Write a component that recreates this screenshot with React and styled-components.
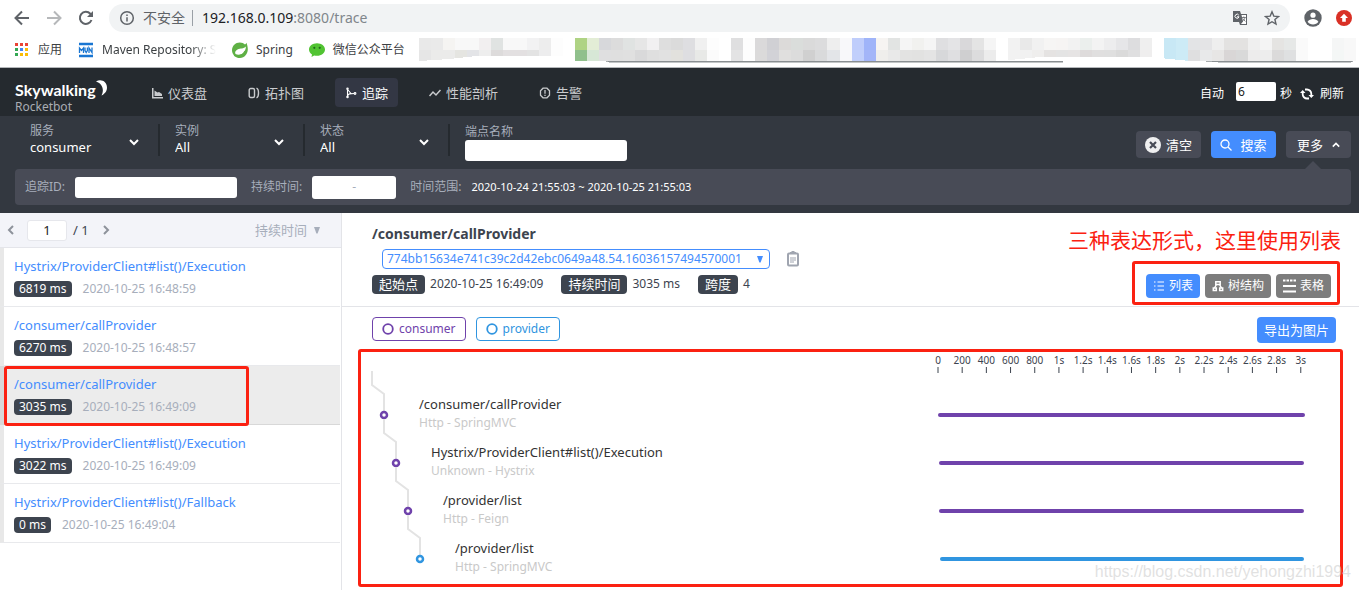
import React from "react";
import styled, { createGlobalStyle } from "styled-components";

const sans = `"Noto Sans", "Open Sans", "Noto Sans CJK SC", sans-serif`;
const red = "#fb2111";
const blue = "#448dfe";
const purple = "#6f42ab";
const sky = "#3095e0";

const Global = createGlobalStyle`
  * { box-sizing: border-box; }
  body { margin: 0; background: #fff; font: 13px/20px ${sans}; color: #3d444f; }
  button, input, select { font: inherit; color: inherit; margin: 0; padding: 0; border: 0; }
  button { background: none; cursor: pointer; }
  select { appearance: none; background: none; cursor: pointer; outline: 0; }
  a { color: inherit; text-decoration: none; }
  svg { display: block; flex: none; }
  h1, p, ul, ol { margin: 0; padding: 0; list-style: none; }
`;

const Page = styled.div`
  display: flex;
  flex-direction: column;
  min-height: 100vh;
  overflow: hidden;
`;

/* ---------- browser chrome ---------- */
const AddressBar = styled.div`
  display: flex;
  align-items: center;
  height: 36px;
  padding: 0 7px 0 13px;
  gap: 14px;
  color: #5f6368;
`;
const ChromeButton = styled.button`
  display: flex;
  justify-content: center;
  min-width: ${(p) => (p.$small ? 16 : 18)}px;
  opacity: ${(p) => (p.$dim ? 0.45 : 1)};
`;
const AddressPill = styled.div`
  display: flex;
  align-items: center;
  flex: 1;
  height: 28px;
  padding: 0 10px;
  border-radius: 14px;
  background: #f1f3f4;
  font-size: 14px;
`;
const Insecure = styled.span`
  margin-left: 8px;
  padding-right: 7px;
  border-right: 1px solid #9aa0a6;
  line-height: 16px;
`;
const AddressText = styled.a`
  flex: 1;
  margin-left: 9px;
  color: #80868b;
  b { font-weight: 400; color: #202124; }
`;
const PillIcons = styled.div`
  display: flex;
  gap: 16px;
`;
const Bookmarks = styled.nav`
  display: flex;
  align-items: center;
  height: 32px;
  padding: 0 2px 3px 14px;
  border-bottom: 1px solid #b4b7ba;
  font-size: 12px;
  color: #3c4043;
`;
const Bookmark = styled.a`
  display: flex;
  align-items: center;
  flex: none;
  gap: 8px;
  margin-right: ${(p) => p.$after || 16}px;
  white-space: nowrap;
`;
const Faded = styled.span`
  width: 114px;
  overflow: hidden;
  mask-image: linear-gradient(90deg, #000 88px, transparent 114px);
`;
const Mosaic = styled.svg`
  flex: 1;
  min-width: 0;
  height: 26px;
`;

/* ---------- application header ---------- */
const Header = styled.header`
  display: flex;
  align-items: center;
  height: 48px;
  padding: 0 15px;
  background: #252a2f;
  color: #fff;
`;
const Brand = styled.div`
  width: 126px;
  padding-top: 10px;
`;
const BrandName = styled.div`
  display: flex;
  font: 700 16px/20px Lato, sans-serif;
`;
const BrandSub = styled.div`
  font-size: 12px;
  line-height: 14px;
  color: #a9adb3;
`;
const Nav = styled.nav`
  display: flex;
  gap: 21px;
  flex: 1;
`;
const NavItem = styled.a`
  display: flex;
  align-items: center;
  gap: 5px;
  height: 29px;
  padding: 2px 10px 0;
  border-radius: 4px;
  color: ${(p) => (p.$active ? "#fff" : "#c9cbce")};
  background: ${(p) => (p.$active ? "#333744" : "none")};
`;
const Refresh = styled.div`
  display: flex;
  align-items: center;
  padding-top: 3px;
  font-size: 12px;
`;
const Seconds = styled.input`
  width: 40px;
  height: 19px;
  margin: 0 4px 4px 12px;
  padding: 0 2px;
  border-radius: 2px;
  background: #fff;
  color: #222;
`;
const RefreshButton = styled.button`
  display: flex;
  align-items: center;
  gap: 6px;
  margin-left: 8px;
`;

/* ---------- filters ---------- */
const Filters = styled.section`
  padding: 0 8px 8px 15px;
  background: #333840;
`;
const FilterRow = styled.div`
  display: flex;
  align-items: flex-start;
  height: 53px;
  padding-top: 8px;
`;
const Picker = styled.label`
  position: relative;
  display: flex;
  flex-direction: column;
  width: 145px;
  height: 32px;
  padding-left: 15px;
  border-right: 2px solid #252a2f;
  font-size: 12px;
  line-height: 14px;
  color: #a7aebb;
  svg { position: absolute; right: 19px; top: 13px; pointer-events: none; }
`;
const PickerSelect = styled.select`
  height: 18px;
  font-size: 13px;
  color: #fff;
  option { color: #222; }
`;
const Endpoint = styled.label`
  display: flex;
  flex: 1;
  flex-direction: column;
  padding-left: 15px;
  font-size: 12px;
  line-height: 16px;
  color: #a7aebb;
`;
const WhiteInput = styled.input`
  width: 162px;
  height: 21px;
  padding: 0 6px;
  border-radius: 3px;
  background: #fff;
  color: #333;
`;
const Actions = styled.div`
  display: flex;
  gap: 10px;
  padding-top: 7px;
`;
const Action = styled.button`
  position: relative;
  display: flex;
  align-items: center;
  justify-content: center;
  gap: ${(p) => p.$gap || 5}px;
  width: 65px;
  height: 27px;
  border-radius: 4px;
  background: ${(p) => (p.$primary ? blue : "#484b56")};
  color: #fff;
`;
const Pointer = styled.svg`
  position: absolute;
  top: 30px;
  left: 19px;
`;
const More = styled.div`
  display: flex;
  align-items: center;
  height: 36px;
  padding: 0 10px;
  border-radius: 4px;
  background: #484b56;
  font-size: 12px;
  color: #a7aebb;
`;
const MoreField = styled.div`
  display: flex;
  align-items: center;
  gap: 10px;
  margin-right: 14px;
  time { font-size: 11px; color: #fff; }
`;
const Range = styled.div`
  display: flex;
  align-items: center;
  width: 84px;
  height: 23px;
  border-radius: 3px;
  background: #fff;
  input { flex: 1; width: 0; background: none; outline: 0; padding: 0 4px; color: #333; }
`;

/* ---------- trace list ---------- */
const Body = styled.main`
  display: flex;
  flex: 1;
`;
const Sidebar = styled.aside`
  flex: none;
  width: 342px;
  border-right: 1px solid #e3e4e8;
`;
const Pager = styled.div`
  display: flex;
  align-items: center;
  height: 35px;
  padding: 0 21px 0 6px;
  border-bottom: 1px solid #e4e5ea;
  background: #f3f4f9;
`;
const PageInput = styled.input`
  width: 40px;
  height: 21px;
  margin: 0 6px 0 11px;
  border: 1px solid #e6e7ec;
  border-radius: 3px;
  background: #fff;
  color: #222;
  text-align: center;
`;
const PageButton = styled.button`
  display: flex;
  margin-left: ${(p) => (p.$next ? 12 : 0)}px;
`;
const Sort = styled.label`
  display: flex;
  align-items: center;
  gap: 6px;
  margin-left: auto;
  color: #a7aebb;
`;
const TraceRow = styled.li`
  position: relative;
  height: 59px;
  margin-right: 1px;
  padding: 8px 0 0 10px;
  border-left: 4px solid ${(p) => (p.$active ? "#d8d8d8" : "#e8e8e8")};
  border-bottom: 1px solid ${(p) => (p.$active ? "#d8d8d8" : "#e8e9ec")};
  background: ${(p) => (p.$active ? "#ececec" : "#fff")};
`;
const TraceLink = styled.a`
  display: block;
  line-height: 20px;
  color: ${blue};
`;
const TraceMeta = styled.div`
  display: flex;
  align-items: center;
  gap: 11px;
  margin-top: 5px;
  font-size: 12px;
  line-height: 16px;
  color: #a7aebb;
`;
const Badge = styled.span`
  padding: 0 ${(p) => (p.$large ? 7 : 5)}px;
  border-radius: 4px;
  background: #3d444f;
  color: #fff;
  font-size: ${(p) => (p.$large ? 13 : 12)}px;
  line-height: ${(p) => (p.$large ? 19 : 16)}px;
`;
const Mark = styled.span`
  position: absolute;
  z-index: 1;
  inset: ${(p) => p.$inset};
  border: 3px solid ${red};
  border-radius: 3px;
  pointer-events: none;
`;

/* ---------- trace detail ---------- */
const Detail = styled.section`
  display: flex;
  flex: 1;
  flex-direction: column;
  min-width: 0;
`;
const DetailHead = styled.div`
  display: flex;
  justify-content: space-between;
  height: 94px;
  padding: 11px 28px 0 30px;
  border-bottom: 1px solid #e3e4e8;
`;
const Title = styled.h1`
  font-size: 14px;
  line-height: 20px;
  font-weight: 700;
`;
const TraceIdLine = styled.div`
  display: flex;
  align-items: center;
  gap: 16px;
  margin: 5px 0 5px 10px;
`;
const TraceId = styled.label`
  display: flex;
  align-items: center;
  justify-content: space-between;
  width: 388px;
  height: 20px;
  padding: 0 6px 0 4px;
  border: 1px solid ${blue};
  border-radius: 4px;
  color: ${blue};
  font-size: 12px;
`;
const Facts = styled.div`
  display: flex;
  align-items: center;
  gap: 5px;
  font-size: 12px;
  line-height: 20px;
`;
const Fact = styled.span`
  margin-right: 13px;
`;
const HeadTools = styled.div`
  display: flex;
  flex-direction: column;
  align-items: flex-end;
`;
const Note = styled.p`
  margin: 1px -10px 19px 0;
  font-size: 21px;
  line-height: 30px;
  white-space: nowrap;
  color: ${red};
`;
const Views = styled.div`
  position: relative;
  display: flex;
  gap: 5px;
`;
const ViewButton = styled.button`
  display: flex;
  align-items: center;
  gap: 4px;
  height: 24px;
  padding: 0 7px;
  border-radius: 4px;
  background: ${(p) => (p.$active ? blue : "#7d7d7d")};
  color: #fff;
  font-size: 12px;
`;
const Legend = styled.div`
  display: flex;
  align-items: flex-start;
  gap: 10px;
  padding: 10px 23px 6px 30px;
`;
const Service = styled.span`
  display: flex;
  align-items: center;
  gap: 5px;
  height: 24px;
  padding: 0 9px;
  border: 1px solid currentColor;
  border-radius: 4px;
  font-size: 12px;
  color: ${(p) => p.$color};
`;
const Export = styled.button`
  height: 26px;
  margin-left: auto;
  padding: 0 7px;
  border-radius: 4px;
  background: ${blue};
  color: #fff;
`;
const Spans = styled.div`
  position: relative;
  padding: 4px 54px 7px 30px;
`;
const SpanRow = styled.div`
  display: grid;
  grid-template-columns: 566fr 367fr;
  height: ${(p) => (p.$axis ? 38 : 48)}px;
`;
const Axis = styled.svg`
  grid-column: 2;
  width: 100%;
  height: 22px;
  overflow: visible;
  font-size: 10px;
  fill: #3d444f;
  text-anchor: middle;
`;
const SpanCell = styled.div`
  display: flex;
  gap: 30px;
  padding-left: ${(p) => 7 + p.$depth * 12}px;
  svg { overflow: visible; }
`;
const SpanName = styled.div`
  padding-top: 4px;
  line-height: 18px;
  color: #333;
`;
const SpanKind = styled.div`
  font-size: 12px;
  line-height: 20px;
  color: #c9c9c9;
`;
const Track = styled.div`
  display: flex;
  align-items: center;
`;
const Bar = styled.div`
  height: 4px;
  border-radius: 2px;
  background: ${(p) => p.$color};
`;
const Watermark = styled.div`
  position: absolute;
  z-index: 2;
  right: 8px;
  bottom: 8px;
  font: 16px/20px "Liberation Sans", sans-serif;
  color: rgba(205, 205, 205, 0.6);
`;

const Chevron = ({ dir = "down", size = 10, color = "#fff", width = 2 }) => {
  const d = {
    down: "M1 3l4 4 4-4",
    up: "M1 7l4-4 4 4",
    left: "M7 1L3 5l4 4",
    right: "M3 1l4 4-4 4",
  }[dir];
  return (
    <svg width={size} height={size} viewBox="0 0 10 10" fill="none" stroke={color} strokeWidth={width}>
      <path d={d} />
    </svg>
  );
};

const Triangle = ({ color }) => (
  <svg width="6" height="7" viewBox="0 0 6 7" fill={color}>
    <path d="M0 0h6L3.6 6.500h-1.200z" />
  </svg>
);

const mosaicCells =
  "e9e9e9/e6e6e6 eaeaea/ebebea f5f4f2/ebebea f8f8f8/e5e5e1 f8f8f8/e3e4e7 f2eff0/eeeeee e0e3e2/dddbdb f8f8f8/e3e0e1 f8f8f8/e3e0e1 f2f2f3/e3e3e3 ededed/ededee fdfdfd/fdfdfd ffffff/ffffff afd384/90c08c e3edd6/d7e7d6 d7d8db/dfdfe0 dcdcdc/dfdfdf e0e3e2/e0e0e0 e6e6e6/d9d9da f1f0f1/dfdfdf dedede/e1e1e1 dbdbdb/e2e1dd dedee1/dedee1 f0f0f0/e8e9e7 fdfdfd/fbfbfb ffffff/ffffff dfdfe0/e3e3e4 fdfdfd/fdfdfd dad9da/dbdada d0d0d4/d2d2d7 dcdad9/e0dfde dadddb/dcdcdc dadada/d0d0d0 dcdcdd/d9dadb eeeeee/e3e5e8 f8f8fa/f8f8fa bfcdfb/c1cffb 9fb4f9/a3b5f8 f6f4f2/efeeec e2e4e3/e9e9e9 f5f5f5/e3e3e2 f1f1ef/e2e2e1 f5f5f5/e4e4e4 dfdfe1/d7d8da e4e4e6/dfdfe1 d9d8da/cfcfd0 e4e4e4/dcdcdd f5f5f5/ececec ffffff/ffffff f2f2f2/f2f2f2 e9e9e9/f1f1f1 f1f1f1/efeeed f6f5f4/e5e3e2 f6f4f3/e4e4e4 f2f2f2/e6e4e4 ebefed/dedbdb f3f3f3/e0dfdf ededee/dfdfdf e6e6e8/dadada dddddf/dfdfe0 efefef/efeeee ffffff/ffffff c8e8f5/c8e8f5 cdebf6/cdebf6 e3e4e6/dfdfe0 e4e4e6/e8e9ea eeeeee/e7e6e5 e3e2e1/d9d6d6 e3e2e1/d9d9d9 efefef/edecec f4f4f4/ededed e5e4e2/dbdada e6e8e7/dfe0e1 fafafa/fafafa ffffff/ffffff ffffff/ffffff f5f6f6/f4f7f6 f8f8f8/f8f8f8"
    .split(" ")
    .map((c) => c.split("/"));

const traces = [
  ["Hystrix/ProviderClient#list()/Execution", "6819 ms", "2020-10-25 16:48:59"],
  ["/consumer/callProvider", "6270 ms", "2020-10-25 16:48:57"],
  ["/consumer/callProvider", "3035 ms", "2020-10-25 16:49:09"],
  ["Hystrix/ProviderClient#list()/Execution", "3022 ms", "2020-10-25 16:49:09"],
  ["Hystrix/ProviderClient#list()/Fallback", "0 ms", "2020-10-25 16:49:04"],
];
const total = 3035;
const spans = [
  { name: "/consumer/callProvider", kind: "Http - SpringMVC", color: purple, start: 0, end: 3035 },
  { name: "Hystrix/ProviderClient#list()/Execution", kind: "Unknown - Hystrix", color: purple, start: 5, end: 3027 },
  { name: "/provider/list", kind: "Http - Feign", color: purple, start: 5, end: 3027 },
  { name: "/provider/list", kind: "Http - SpringMVC", color: sky, start: 20, end: 3025 },
];
const ticks = Array.from({ length: 16 }, (_, i) => i * 200);
const tickLabel = (t) => (t < 1000 ? String(t) : `${t / 1000}s`);

const navItems = [
  ["仪表盘", <path key="a" d="M1 1h1.500v9H12v1.500H1zM3.500 9V3.500l3 2L8 5l3 2v2z" fill="currentColor" />],
  ["拓扑图", <g key="b" fill="none" stroke="currentColor" strokeWidth="1.4"><rect x="1.200" y="1.500" width="5.300" height="9" rx="1.500" /><path d="M8.500 1.200c1.600.6 2 2 2 4.800s-.4 4.200-2 4.800" /></g>],
  ["追踪", <g key="c" fill="none" stroke="currentColor" strokeWidth="1.100"><path d="M2.500 2.500v7.500M2.500 9.500C3 6.500 5 6.500 9 6.500M3 3l3 3.500" /><circle cx="2.500" cy="1.800" r=".7" /><circle cx="2.500" cy="10" r=".7" /><circle cx="10" cy="6.500" r=".9" /></g>],
  ["性能剖析", <path key="d" d="M.5 9L4 5l3 3 4.500-5" fill="none" stroke="currentColor" strokeWidth="1.500" />],
  ["告警", <g key="e" fill="none" stroke="currentColor" strokeWidth="1.300"><path d="M4 1.200h4l2.500 2.600v4.400L8 10.800H4L1.500 8.200V3.800z" /><path d="M6 3v3.800M6 7.800V9" /></g>],
];

export default function App() {
  return (
    <Page>
      <Global />
      <AddressBar>
        <ChromeButton aria-label="Back">
          <svg width="16" height="16" viewBox="0 0 16 16" fill="none" stroke="currentColor" strokeWidth="2"><path d="M15 8H2M8 1.500L1.500 8 8 14.500" /></svg>
        </ChromeButton>
        <ChromeButton aria-label="Forward" $dim>
          <svg width="16" height="16" viewBox="0 0 16 16" fill="none" stroke="currentColor" strokeWidth="2"><path d="M1 8h13M8 1.500L14.500 8 8 14.500" /></svg>
        </ChromeButton>
        <ChromeButton aria-label="Reload">
          <svg width="16" height="16" viewBox="0 0 16 16" fill="none" stroke="currentColor" strokeWidth="2"><path d="M13.500 10A6 6 0 1 1 12.300 3.800L14 5.500" /><path d="M15 1v6H9z" fill="currentColor" stroke="none" /></svg>
        </ChromeButton>
        <AddressPill>
          <svg width="16" height="16" viewBox="0 0 16 16" fill="none" stroke="currentColor" strokeWidth="1.500"><circle cx="8" cy="8" r="6.300" /><path d="M8 7.200V11.500M8 4.500V6" /></svg>
          <Insecure>不安全</Insecure>
          <AddressText href="#trace"><b>192.168.0.109</b>:8080/trace</AddressText>
          <PillIcons>
            <svg width="16" height="16" viewBox="0 0 16 16"><path d="M1 1h7l1 3h6v11H8l-1-3H1z" fill="#5f6368" /><path d="M9.500 5H14v9H9l2-2.500z" fill="#fff" /><path d="M6.800 5.200a2 2 0 1 0 .2 1.600H5" fill="none" stroke="#fff" /><path d="M9.800 7.500h4M11.800 6.500v1M13 7.500c-.4 1.800-1.400 3-2.800 3.800M10.800 8.500l2.600 3" fill="none" stroke="#5f6368" strokeWidth=".8" /></svg>
            <svg width="16" height="16" viewBox="0 0 16 16" fill="none" stroke="#5f6368" strokeWidth="1.400"><path d="M8 1.800l1.800 4.300 4.700.4-3.600 3 1.100 4.600L8 11.700l-4 2.400 1.100-4.600-3.600-3 4.700-.4z" /></svg>
          </PillIcons>
        </AddressPill>
        <ChromeButton aria-label="Profile">
          <svg width="18" height="18" viewBox="0 0 18 18"><circle cx="9" cy="9" r="8.700" fill="#5f6368" /><circle cx="9" cy="6.200" r="2.600" fill="#fff" /><path d="M3.600 12.800c1.200-2 3.200-2.800 5.400-2.800s4.200.8 5.400 2.800c-1.300 1.900-3.200 2.700-5.400 2.700s-4.100-.8-5.400-2.700z" fill="#fff" /></svg>
        </ChromeButton>
        <ChromeButton aria-label="Update" $small>
          <svg width="16" height="16" viewBox="0 0 16 16"><circle cx="8" cy="8" r="8" fill="#d93025" /><path d="M8 3.800l4 4.200H9.800v3.800H6.200V8H4z" fill="#fff" /></svg>
        </ChromeButton>
      </AddressBar>

      <Bookmarks>
        <Bookmark href="#apps">
          <svg width="16" height="16" viewBox="0 0 16 16">
            {["#ea4335", "#ea4335", "#ea4335", "#34a853", "#4285f4", "#fbbc04", "#34a853", "#fbbc04", "#fbbc04"].map((c, i) => (
              <rect key={i} x={1 + (i % 3) * 5} y={1 + Math.floor(i / 3) * 5} width="3" height="3" fill={c} />
            ))}
          </svg>
          应用
        </Bookmark>
        <Bookmark href="#maven">
          <svg width="16" height="16" viewBox="0 0 16 16" fill="none" stroke="#1976d2"><path d="M1 2h14M1 14h14" strokeWidth="2.400" /><path d="M1.500 11V6l2 2.500L5.500 6v5M7 5.500v3l1.200 2 1.200-2v-3M11 11V6l3 4.500V5.500" strokeWidth="1.300" /></svg>
          <Faded>Maven Repository: S</Faded>
        </Bookmark>
        <Bookmark href="#spring">
          <svg width="16" height="16" viewBox="0 0 16 16"><path d="M14.500.8c.6 2 1.300 4 1.300 6.500C15.800 12 12.500 16 8 16S0 12.500 0 8.200 3.500.5 7.800.5c2.200 0 4 .8 5.200 2.100.7-.5 1.200-1.100 1.500-1.800z" fill="#5fb045" /><path d="M14 4.500c-2.500 2.500-5.500 1.500-8.500 3C3.500 8.600 2.500 10.500 3.500 12c3 1.500 9.500 1.300 10.500-7.500z" fill="#fff" /><path d="M2 13.500c6 1.500 9.500-1 11-4.500" stroke="#5fb045" fill="none" strokeWidth="1.200" /></svg>
          Spring
        </Bookmark>
        <Bookmark href="#weixin" $after="14">
          <svg width="16" height="16" viewBox="0 0 16 16"><path d="M8 1.200c4.500 0 8 2.800 8 6.300s-3.500 6.300-8 6.300c-1 0-2-.1-2.800-.4L2.500 15l.5-2.600C1.200 11.300 0 9.500 0 7.500 0 4 3.500 1.200 8 1.200z" fill="#51c332" /><circle cx="5.300" cy="5.800" r="1.100" fill="#20691a" /><circle cx="10.700" cy="5.800" r="1.100" fill="#20691a" /></svg>
          微信公众平台
        </Bookmark>
        <Mosaic viewBox="0 0 937 26" preserveAspectRatio="none" shapeRendering="crispEdges" aria-hidden="true">
          {mosaicCells.map(([a, b], i) => (
            <React.Fragment key={i}>
              <rect x={i * 12} y="1" width="12" height="12" fill={`#${a}`} />
              <rect x={i * 12} y="13" width="12" height="11" fill={`#${b}`} />
            </React.Fragment>
          ))}
          <path d="M0 24l30-2 28-3h92v5z" fill="#fff" />
          <path d="M187 24h456v1H190zM786 24h147l-2 1H798z" fill="#8a8f92" stroke="#8a8f92" strokeWidth=".5" />
          <path d="M580 24l40-4h110l40 4z" fill="#fff" />
        </Mosaic>
      </Bookmarks>

      <Header>
        <Brand>
          <BrandName>
            Skywalking
            <svg width="12" height="16" viewBox="0 0 12 16"><path d="M0 1.500C5-1.500 11 1.500 11 7.500c0 4-2.500 6.500-5.500 8C8 11 7.500 4 0 1.500z" fill="#fff" /></svg>
          </BrandName>
          <BrandSub>Rocketbot</BrandSub>
        </Brand>
        <Nav>
          {navItems.map(([name, icon]) => (
            <NavItem key={name} href={`#${name}`} $active={name === "追踪"}>
              <svg width="12" height="12" viewBox="0 0 12 12">{icon}</svg>
              {name}
            </NavItem>
          ))}
        </Nav>
        <Refresh>
          <label htmlFor="interval">自动</label>
          <Seconds id="interval" defaultValue="6" />
          秒
          <RefreshButton>
            <svg width="14" height="12" viewBox="0 0 14 12" fill="none" stroke="#fff" strokeWidth="1.800"><path d="M5 1.500h2a4.300 4.300 0 0 1 4.300 4.300V8M9 10.500H7A4.300 4.300 0 0 1 2.700 6.200V4" /><path d="M8.500 7h5.500L11.300 10zM0 5h5.500L2.700 2z" fill="#fff" stroke="none" /></svg>
            刷新
          </RefreshButton>
        </Refresh>
      </Header>

      <Filters>
        <FilterRow>
          {[["服务", "consumer"], ["实例", "All"], ["状态", "All"]].map(([label, value]) => (
            <Picker key={label}>
              {label}
              <PickerSelect><option>{value}</option></PickerSelect>
              <Chevron />
            </Picker>
          ))}
          <Endpoint>
            端点名称
            <WhiteInput />
          </Endpoint>
          <Actions>
            <Action>
              <svg width="16" height="16" viewBox="0 0 16 16"><circle cx="8" cy="8" r="8" fill="#efeff0" /><path d="M5 5l6 6M11 5l-6 6" stroke="#484b56" strokeWidth="2.200" /></svg>
              清空
            </Action>
            <Action $primary $gap="8">
              <svg width="12" height="12" viewBox="0 0 12 12" fill="none" stroke="#fff" strokeWidth="1.300"><circle cx="5" cy="5" r="4" /><path d="M8 8l3.500 3.500" /></svg>
              搜索
            </Action>
            <Action $gap="9">
              更多
              <Chevron dir="up" size={8} />
              <Pointer width="16" height="8" viewBox="0 0 16 8"><path d="M0 8l8-8 8 8z" fill="#484b56" /></Pointer>
            </Action>
          </Actions>
        </FilterRow>
        <More>
          <MoreField>
            <label htmlFor="trace-id">追踪ID:</label>
            <WhiteInput id="trace-id" />
          </MoreField>
          <MoreField>
            <label htmlFor="min-duration">持续时间:</label>
            <Range>
              <input id="min-duration" />-<input aria-label="最长持续时间" />
            </Range>
          </MoreField>
          <MoreField>
            时间范围:
            <time>2020-10-24 21:55:03 ~ 2020-10-25 21:55:03</time>
          </MoreField>
        </More>
      </Filters>

      <Body>
        <Sidebar>
          <Pager>
            <PageButton aria-label="上一页"><Chevron dir="left" color="#8d929b" /></PageButton>
            <PageInput aria-label="页码" defaultValue="1" />
            / 1
            <PageButton aria-label="下一页" $next><Chevron dir="right" color="#8d929b" /></PageButton>
            <Sort>
              <select aria-label="排序"><option>持续时间</option></select>
              <Triangle color="#a7aebb" />
            </Sort>
          </Pager>
          <ul>
            {traces.map(([name, ms, time], i) => (
              <TraceRow key={i} $active={i === 2}>
                <TraceLink href="#trace">{name}</TraceLink>
                <TraceMeta><Badge>{ms}</Badge>{time}</TraceMeta>
                {i === 2 && <Mark $inset="0 91px -2px 0" />}
              </TraceRow>
            ))}
          </ul>
        </Sidebar>

        <Detail>
          <DetailHead>
            <div>
              <Title>/consumer/callProvider</Title>
              <TraceIdLine>
                <TraceId>
                  <select aria-label="追踪ID"><option>774bb15634e741c39c2d42ebc0649a48.54.16036157494570001</option></select>
                  <Triangle color={blue} />
                </TraceId>
                <svg width="14" height="16" viewBox="0 0 14 16" fill="none" stroke="#a0a5b0"><rect x="2" y="2.500" width="10" height="12" rx="1" strokeWidth="2" /><path d="M4 2h6M5.500 1h3" strokeWidth="2" /><path d="M4 7h6M4 9h6M4 11h4" /></svg>
              </TraceIdLine>
              <Facts>
                <Badge $large>起始点</Badge><Fact>2020-10-25 16:49:09</Fact>
                <Badge $large>持续时间</Badge><Fact>3035 ms</Fact>
                <Badge $large>跨度</Badge><Fact>4</Fact>
              </Facts>
            </div>
            <HeadTools>
              <Note>三种表达形式，这里使用列表</Note>
              <Views>
                <ViewButton $active>
                  <svg width="12" height="12" viewBox="0 0 12 12" stroke="#fff" strokeWidth="1.200"><path d="M1 2h1.500M1 6h1.500M1 10h1.500M4.500 2H11M4.500 6H11M4.500 10H11" /></svg>
                  列表
                </ViewButton>
                <ViewButton>
                  <svg width="12" height="12" viewBox="0 0 12 12" fill="none" stroke="#fff" strokeWidth="1.500"><path d="M3.800 1.800h4.400v2.700H3.800zM4.500 4.500L2.500 8M7.500 4.500L9.500 8" /><path d="M1.300 8h3v2.500h-3zM7.700 8h3v2.500h-3z" /></svg>
                  树结构
                </ViewButton>
                <ViewButton>
                  <svg width="13" height="14" viewBox="0 0 13 14" stroke="#fff" strokeWidth="1.800"><path d="M0 1.500h13" strokeDasharray="2.500 1" /><path d="M0 7h13M0 12.500h13" /></svg>
                  表格
                </ViewButton>
                <Mark $inset="-13px -9px -7px -14px" />
              </Views>
            </HeadTools>
          </DetailHead>

          <Legend>
            {[["consumer", purple], ["provider", sky]].map(([name, color]) => (
              <Service key={name} $color={color}>
                <svg width="12" height="12" viewBox="0 0 12 12" fill="none" stroke="currentColor" strokeWidth="1.800"><circle cx="6" cy="6" r="4.800" /></svg>
                {name}
              </Service>
            ))}
            <Export>导出为图片</Export>
          </Legend>

          <Spans>
            <SpanRow $axis>
              <Axis>
                {ticks.map((t) => {
                  const x = `${(t / total) * 100}%`;
                  return (
                    <g key={t}>
                      <text x={x} y="11">{tickLabel(t)}</text>
                      <line x1={x} x2={x} y1="14" y2="20" stroke="#3d444f" />
                    </g>
                  );
                })}
              </Axis>
            </SpanRow>
            {spans.map((s, i) => (
              <SpanRow key={i}>
                <SpanCell $depth={i}>
                  <svg width="10" height="48" viewBox="0 0 10 48" fill="none">
                    <path d="M-7 -20V-6L5 3V20" stroke="#e3e3e3" strokeWidth="2" />
                    <circle cx="5" cy="24" r="3" stroke={s.color} strokeWidth="2.500" />
                  </svg>
                  <div>
                    <SpanName>{s.name}</SpanName>
                    <SpanKind>{s.kind}</SpanKind>
                  </div>
                </SpanCell>
                <Track>
                  <Bar
                    $color={s.color}
                    style={{ marginLeft: `${(s.start / total) * 100}%`, width: `${((s.end - s.start) / total) * 100}%` }}
                  />
                </Track>
              </SpanRow>
            ))}
            <Mark $inset="0 16px 3px 16px" />
            <Watermark>https://blog.csdn.net/yehongzhi1994</Watermark>
          </Spans>
        </Detail>
      </Body>
    </Page>
  );
}
